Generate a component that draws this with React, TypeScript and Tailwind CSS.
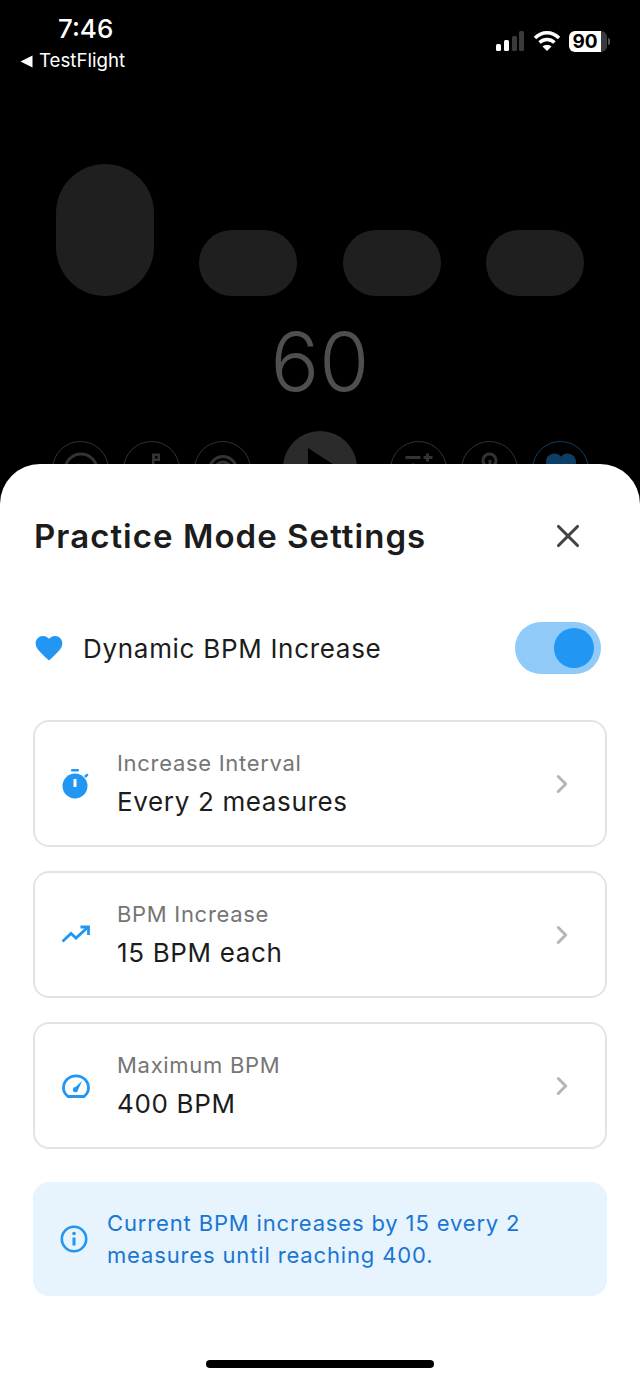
import React from 'react';
import { ChevronRight, X } from 'lucide-react';

const Blue = '#2196f3';
const HeartPath = 'M12 21.35l-1.45-1.32C5.4 15.36 2 12.28 2 8.5 2 5.42 4.42 3 7.5 3c1.74 0 3.41.81 4.5 2.09C13.09 3.81 14.76 3 16.5 3 19.58 3 22 5.42 22 8.5c0 3.78-3.4 6.86-8.55 11.54L12 21.35z';

const StatusBar = () => (
    <div className="flex justify-between items-start h-[84px]">
        <div className="w-[132px] flex flex-col items-start pl-[20px] text-white">
            <div className="ml-[38px] mt-[13px] text-[26px] leading-[32px] font-medium">7:46</div>
            <div className="flex items-center gap-[6px] mt-[4px]">
                <svg width="13" height="13" viewBox="0 0 13 13"><path d="M0.5 6.5 L12.5 0.5 V12.5 Z" fill="#fff" /></svg>
                <span className="text-[18.7px] leading-[24px]">TestFlight</span>
            </div>
        </div>
        <div className="flex items-center mt-[29px] mr-[30px] h-[24px]">
            <svg width="30" height="24" viewBox="0 0 30 24" fill="#fff">
                <rect x="1" y="15" width="5" height="7" rx="1.5" />
                <rect x="9" y="11" width="5" height="11" rx="1.5" />
                <rect x="17" y="7" width="5" height="15" rx="1.5" fill="#3a3a3a" />
                <rect x="24" y="2" width="5" height="20" rx="1.5" fill="#3a3a3a" />
            </svg>
            <svg className="ml-[8px]" width="28" height="24" viewBox="0 0 28 24" fill="none" stroke="#fff" strokeWidth="3.6">
                <path d="M2 9 C9 2 19 2 26 9" />
                <path d="M6.5 13.5 C11 9.5 17 9.5 21.5 13.5" />
                <path d="M14 22 L9.5 17.5 C12 15.6 16 15.6 18.5 17.5 Z" fill="#fff" stroke="none" />
            </svg>
            <div className="ml-[8px] w-[32px] h-[21px] rounded-l-[6px] bg-white flex items-center justify-center text-black text-[19px] font-bold leading-none">90</div>
            <div className="w-[6px] h-[21px] rounded-r-[6px] bg-[#3a3a3a]"></div>
            <div className="w-[2px] h-[7px] ml-[1px] rounded-r-[2px] bg-[#555555]"></div>
        </div>
    </div>
);

const CircleButton = ({ children, active }: { children: React.ReactNode; active?: boolean }) => (
    <div className={`w-[57px] h-[57px] rounded-full border flex items-center justify-center shrink-0 ${active ? 'border-[#0d3f66]' : 'border-[#333333]'}`}>
        {children}
    </div>
);

const Backdrop = () => (
    <div className="h-[380px] overflow-hidden">
        <div className="flex items-end h-[212px] pl-[56px]">
            <div className="w-[98px] h-[132px] rounded-[49px] bg-[#1f1f1f]"></div>
            <div className="w-[98px] h-[66px] rounded-[33px] bg-[#1f1f1f] ml-[45px]"></div>
            <div className="w-[98px] h-[66px] rounded-[33px] bg-[#1f1f1f] ml-[46px]"></div>
            <div className="w-[98px] h-[66px] rounded-[33px] bg-[#1f1f1f] ml-[45px]"></div>
        </div>
        <div className="mt-[21px] h-[90px] text-center text-[#4f4f4f] text-[81px] leading-[90px] font-light">60</div>
        <div className="flex items-start mt-[24px] pl-[52px]">
            <div className="mt-[10px] flex gap-[14px]">
                <CircleButton>
                    <svg width="36" height="36" viewBox="0 0 36 36" fill="none" stroke="#333333" strokeWidth="3"><circle cx="18" cy="18" r="16" /><path d="M15 11 L24 18 L15 25 Z" fill="#333333" stroke="none" /></svg>
                </CircleButton>
                <CircleButton>
                    <svg width="36" height="36" viewBox="0 0 36 36" fill="#333333"><path fillRule="evenodd" d="M18 1.5 H26 V9 H20.5 V27 H18 Z M21 4 H23.5 V6.5 H21 Z" /><circle cx="13" cy="27" r="7" /></svg>
                </CircleButton>
                <CircleButton>
                    <svg width="36" height="36" viewBox="0 0 36 36" fill="none" stroke="#333333" strokeWidth="3"><circle cx="18" cy="18" r="13.5" /><circle cx="18" cy="18" r="8" /></svg>
                </CircleButton>
            </div>
            <div className="ml-[32px] w-[74px] h-[74px] rounded-full bg-[#2b2b2b] flex items-center justify-center shrink-0">
                <svg className="ml-[8px] mt-[4px]" width="40" height="50" viewBox="0 0 40 50"><path d="M4 3 L38 25 L4 47 Z" fill="#000" /></svg>
            </div>
            <div className="ml-[33px] mt-[10px] flex gap-[14px]">
                <CircleButton>
                    <svg width="36" height="36" viewBox="0 0 36 36" fill="none" stroke="#333333" strokeWidth="3"><path d="M4.5 5.5 H19.5 M22.5 5.5 H31.5 M26.5 1.5 V9.5 M12 11.5 V20" /></svg>
                </CircleButton>
                <CircleButton>
                    <svg width="36" height="36" viewBox="0 0 36 36" fill="none" stroke="#333333" strokeWidth="3"><circle cx="17.5" cy="8.5" r="6.5" /><path d="M18 8 V20" /></svg>
                </CircleButton>
                <CircleButton active>
                    <svg className="mt-[-6px]" width="36" height="36" viewBox="0 0 24 24" fill="#0d3f66"><path d={HeartPath} /></svg>
                </CircleButton>
            </div>
        </div>
    </div>
);

const SettingRow = ({ icon, label, value }: { icon: React.ReactNode; label: string; value: string }) => (
    <div className="h-[127px] rounded-[16px] border-2 border-[#e4e4e4] flex items-center pl-[26px] pr-[28px]">
        <div className="w-[30px] h-[30px] flex items-center justify-center shrink-0">{icon}</div>
        <div className="ml-[26px] flex-1 mb-[2px]">
            <div className="text-[22px] leading-[30px] text-[#757575] tracking-[0.7px]">{label}</div>
            <div className="mt-[8px] text-[26px] leading-[32px] text-[#1c1c1c] tracking-[0.65px]">{value}</div>
        </div>
        <ChevronRight size={30} color="#b5b5b5" strokeWidth={2.4} />
    </div>
);

const Sheet = () => (
    <div className="bg-white rounded-t-[40px] h-[921px] px-[33px] text-[#1c1c1c]">
        <div className="flex items-center justify-between pt-[40px] h-[104px]">
            <h2 className="ml-[1px] text-[33px] leading-[40px] font-semibold tracking-[1.04px]">Practice Mode Settings</h2>
            <X size={38} color="#444444" strokeWidth={2} className="mr-[20px]" />
        </div>
        <div className="flex items-center mt-[54px] h-[52px]">
            <svg width="32" height="32" viewBox="0 0 24 24" fill={Blue}><path d={HeartPath} /></svg>
            <span className="ml-[18px] mt-[2px] flex-1 text-[26px] leading-[34px] tracking-[0.7px]">Dynamic BPM Increase</span>
            <div className="w-[86px] h-[52px] rounded-full bg-[#90caf9] flex items-center justify-end pr-[7px] mr-[6px]">
                <div className="w-[40px] h-[40px] rounded-full bg-[#2196f3]"></div>
            </div>
        </div>
        <div className="flex flex-col gap-[24px] mt-[46px]">
            <SettingRow
                label="Increase Interval"
                value="Every 2 measures"
                icon={<svg width="28" height="32" viewBox="0 0 28 32" fill={Blue}><rect x="9" y="1" width="8" height="2.5" rx="1" /><circle cx="13" cy="18" r="12.5" /><path d="M22 8 L25 5.5 L26.5 7 L24 10 Z" /><rect x="11.5" y="11" width="3" height="8" rx="0.5" fill="#fff" /></svg>}
            />
            <SettingRow
                label="BPM Increase"
                value="15 BPM each"
                icon={<svg width="30" height="20" viewBox="0 0 30 20" fill="none" stroke={Blue} strokeWidth="2.8"><path d="M1.5 16.5 L10 8.5 L15 13 L26 3" /><path d="M19.5 2 H27.5 V10" /></svg>}
            />
            <SettingRow
                label="Maximum BPM"
                value="400 BPM"
                icon={<svg width="28" height="24" viewBox="0 0 28 24" fill="none" stroke={Blue} strokeWidth="2.8"><path d="M6 22.5 H22 C25 20 26.5 17 26.5 14 C26.5 7 21 1.8 14 1.8 C7 1.8 1.5 7 1.5 14 C1.5 17 3 20 6 22.5 Z" /><path d="M20 7 L13.5 13 A2.6 2.6 0 1 0 16 16 Z" fill={Blue} stroke="none" /></svg>}
            />
        </div>
        <div className="mt-[33px] h-[114px] rounded-[16px] bg-[#e7f3fd] flex items-center pl-[27px] pr-[20px]">
            <svg width="28" height="28" viewBox="0 0 28 28" fill="none" stroke={Blue} strokeWidth="2.6" className="shrink-0"><circle cx="14" cy="14" r="12.2" /><path d="M14 12.5 V20.5" strokeWidth="3" /><circle cx="14" cy="8.5" r="1.8" fill={Blue} stroke="none" /></svg>
            <div className="ml-[19px] text-[22px] leading-[32px] text-[#1976d2] tracking-[0.85px]">Current BPM increases by 15 every 2 measures until reaching 400.</div>
        </div>
        <div className="w-[228px] h-[8px] rounded-full bg-[#000000] mx-auto mt-[64px]"></div>
    </div>
);

export default function App() {
    return (
        <div className="w-[640px] h-[1385px] bg-black overflow-hidden font-['Inter',sans-serif]">
            <StatusBar />
            <Backdrop />
            <Sheet />
        </div>
    );
}
